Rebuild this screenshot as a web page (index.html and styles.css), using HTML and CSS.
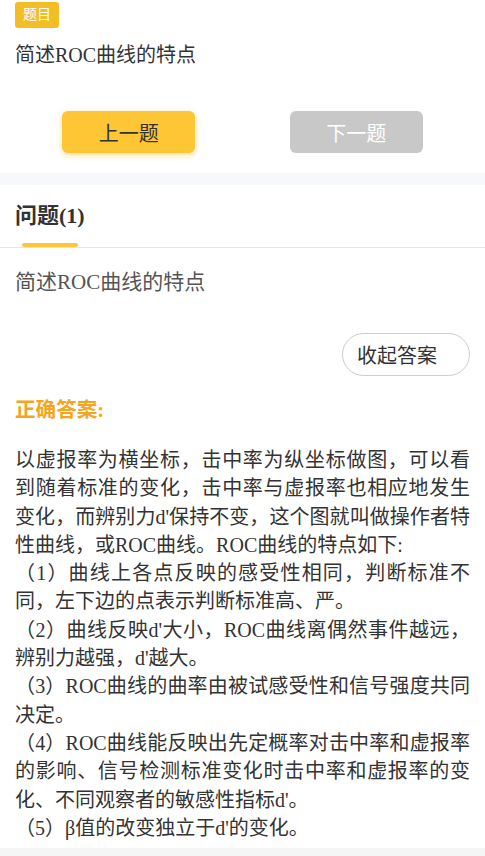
FILE: index.html
```html
<!DOCTYPE html>
<html lang="zh-CN">
<head>
    <meta charset="UTF-8">
    <meta name="viewport" content="width=device-width, initial-scale=1.0">
    <title>题目详情</title>
    <link rel="stylesheet" href="styles.css">
</head>
<body>
    <div class="topic">
        <span class="tag">题目</span>
        <p class="topic-title">简述ROC曲线的特点</p>
        <div class="nav">
            <button class="btn btn-prev">上一题</button>
            <button class="btn btn-next">下一题</button>
        </div>
    </div>

    <div class="divider"></div>

    <div class="tabs">
        <div class="tab active">问题(1)</div>
    </div>

    <div class="question">
        <p class="q-text">简述ROC曲线的特点</p>
        <div class="toggle-row">
            <button class="toggle">收起答案</button>
        </div>
        <h3 class="answer-label">正确答案:</h3>
        <div class="answer">
            <p>以虚报率为横坐标，击中率为纵坐标做图，可以看到随着标准的变化，击中率与虚报率也相应地发生变化，而辨别力d'保持不变，这个图就叫做操作者特性曲线，或ROC曲线。ROC曲线的特点如下:</p>
            <p>（1）曲线上各点反映的感受性相同，判断标准不同，左下边的点表示判断标准高、严。</p>
            <p>（2）曲线反映d'大小，ROC曲线离偶然事件越远，辨别力越强，d'越大。</p>
            <p>（3）ROC曲线的曲率由被试感受性和信号强度共同<span class="nowrap">决定。</span></p>
            <p>（4）ROC曲线能反映出先定概率对击中率和虚报率的影响、信号检测标准变化时击中率和虚报率的变化、不同观察者的敏感性指标d'。</p>
            <p>（5）β值的改变独立于d'的变化。</p>
        </div>
    </div>

    <div class="footer-band"></div>
</body>
</html>
```

FILE: styles.css
```css
body {
    margin: 0;
    background-color: #fff;
    font-family: "Liberation Serif", "Noto Sans CJK SC", serif;
    color: #333;
}
p, h3 {
    margin: 0;
}
button {
    font-family: "Liberation Serif", "Noto Sans CJK SC", serif;
    border: none;
    cursor: pointer;
}
.topic {
    padding: 2px 15px 20px;
}
.tag {
    display: inline-block;
    height: 26px;
    line-height: 26px;
    padding: 0 8px;
    font-size: 14px;
    color: #fff;
    background-color: #f3bd26;
    border-radius: 3px;
    vertical-align: top;
}
.topic-title {
    margin-top: 13px;
    font-size: 20px;
    line-height: 28px;
    color: #333;
}
.nav {
    display: flex;
    justify-content: space-around;
    margin-top: 42px;
}
.btn {
    width: 133px;
    height: 42px;
    border-radius: 6px;
    font-size: 20px;
}
.btn-prev {
    background-color: #fec535;
    color: #333;
    box-shadow: 0 2px 6px rgba(254, 197, 53, 0.55);
}
.btn-next {
    background-color: #c8c8c8;
    color: #fff;
}
.divider {
    height: 12px;
    background-color: #f7f8fc;
}
.tabs {
    padding: 0 15px;
    border-bottom: 1px solid #e6e6e6;
}
.tab {
    display: inline-block;
    position: relative;
    height: 62px;
    line-height: 62px;
    font-size: 22px;
    font-weight: bold;
    color: #333;
}
.tab.active::after {
    content: "";
    position: absolute;
    left: 50%;
    bottom: 0;
    width: 56px;
    height: 4px;
    margin-left: -28px;
    border-radius: 2px;
    background-color: #fec535;
}
.question {
    padding: 20px 15px 6px;
}
.q-text {
    font-size: 21px;
    line-height: 29px;
    color: #555;
}
.toggle-row {
    display: flex;
    justify-content: flex-end;
    margin-top: 36px;
}
.toggle {
    width: 128px;
    height: 43px;
    padding: 0 0 0 14px;
    text-align: left;
    font-size: 20px;
    color: #333;
    background-color: #fff;
    border: 1px solid #ccc;
    border-radius: 22px;
}
.answer-label {
    margin-top: 20px;
    font-size: 20.6px;
    line-height: 29px;
    font-weight: bold;
    color: #f5a51c;
}
.answer {
    margin-top: 21px;
    font-size: 20px;
    line-height: 28.3px;
    text-align: justify;
    color: #333;
}
.nowrap {
    white-space: nowrap;
}
.footer-band {
    height: 20px;
    background-color: #f5f5f5;
}
```
